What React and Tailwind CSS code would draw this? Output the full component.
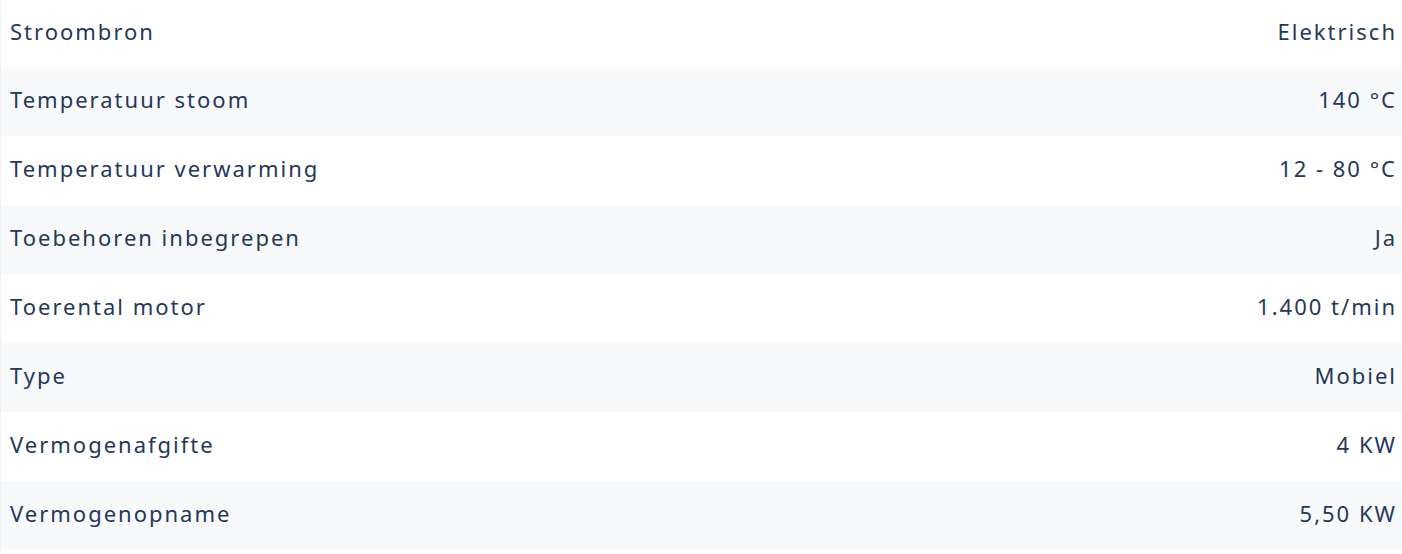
export default function App() {
  const rows = [
    ["Stroombron", "Elektrisch"],
    ["Temperatuur stoom", "140 °C"],
    ["Temperatuur verwarming", "12 - 80 °C"],
    ["Toebehoren inbegrepen", "Ja"],
    ["Toerental motor", "1.400 t/min"],
    ["Type", "Mobiel"],
    ["Vermogenafgifte", "4 KW"],
    ["Vermogenopname", "5,50 KW"],
  ];
  return (
    <div className="w-[1402px] h-[554px] bg-white overflow-hidden" style={{ fontFamily: '"Noto Sans", sans-serif' }}>
      <div className="flex flex-col border-l border-[#f0f1f3]">
        {rows.map(([k, v], i) => (
          <div
            key={k}
            className={`flex items-center justify-between pl-[9px] pr-[5px] pb-[5px] text-[22px] tracking-[2px] text-[#25385a] ${i === 0 ? "h-[67px]" : "h-[69px]"} ${i % 2 === 1 ? "bg-[#f8f9fb]" : "bg-white"}`}
          >
            <span>{k}</span>
            <span>{v}</span>
          </div>
        ))}
      </div>
    </div>
  );
}
